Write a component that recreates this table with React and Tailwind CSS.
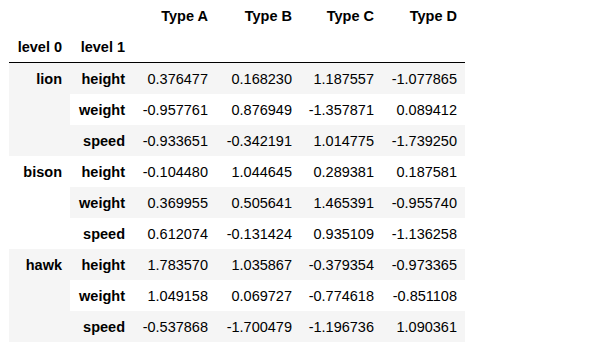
import React from "react";

const rows = [
  ["lion", [
    ["height", "0.376477", "0.168230", "1.187557", "-1.077865"],
    ["weight", "-0.957761", "0.876949", "-1.357871", "0.089412"],
    ["speed", "-0.933651", "-0.342191", "1.014775", "-1.739250"],
  ]],
  ["bison", [
    ["height", "-0.104480", "1.044645", "0.289381", "0.187581"],
    ["weight", "0.369955", "0.505641", "1.465391", "-0.955740"],
    ["speed", "0.612074", "-0.131424", "0.935109", "-1.136258"],
  ]],
  ["hawk", [
    ["height", "1.783570", "1.035867", "-0.379354", "-0.973365"],
    ["weight", "1.049158", "0.069727", "-0.774618", "-0.851108"],
    ["speed", "-0.537868", "-1.700479", "-1.196736", "1.090361"],
  ]],
];

const cell = "px-2 pt-px pb-0 leading-[30px] text-right align-middle";

export default function App() {
  let n = 0;
  return (
    <div className="w-[607px] h-[342px] bg-white overflow-hidden pl-[9px] font-['Liberation_Sans',Arial,sans-serif] text-[14.5px] text-black">
      <table className="table-fixed border-collapse w-[456px]">
        <colgroup>
          <col className="w-[61px]" />
          <col className="w-[63px]" />
          <col className="w-[83px]" />
          <col className="w-[84px]" />
          <col className="w-[82px]" />
          <col className="w-[83px]" />
        </colgroup>
        <thead className="border-b border-black">
          <tr>
            <th className={cell}></th>
            <th className={cell}></th>
            <th className={cell + " font-bold"}>Type A</th>
            <th className={cell + " font-bold"}>Type B</th>
            <th className={cell + " font-bold"}>Type C</th>
            <th className={cell + " font-bold"}>Type D</th>
          </tr>
          <tr>
            <th className={cell + " font-bold"}>level 0</th>
            <th className={cell + " font-bold"}>level 1</th>
            <th className={cell}></th>
            <th className={cell}></th>
            <th className={cell}></th>
            <th className={cell}></th>
          </tr>
        </thead>
        <tbody>
          {rows.map(([animal, sub]) =>
            sub.map((r, i) => {
              const odd = n++ % 2 === 0;
              return (
                <tr key={animal + r[0]} className={odd ? "bg-[#f5f5f5]" : "bg-white"}>
                  {i === 0 && (
                    <th rowSpan={3} className="px-2 pt-px pb-0 leading-[30px] text-right align-top font-bold">
                      {animal}
                    </th>
                  )}
                  <th className={cell + " font-bold"}>{r[0]}</th>
                  {r.slice(1).map((v, j) => (
                    <td key={j} className={cell}>{v}</td>
                  ))}
                </tr>
              );
            })
          )}
        </tbody>
      </table>
    </div>
  );
}
